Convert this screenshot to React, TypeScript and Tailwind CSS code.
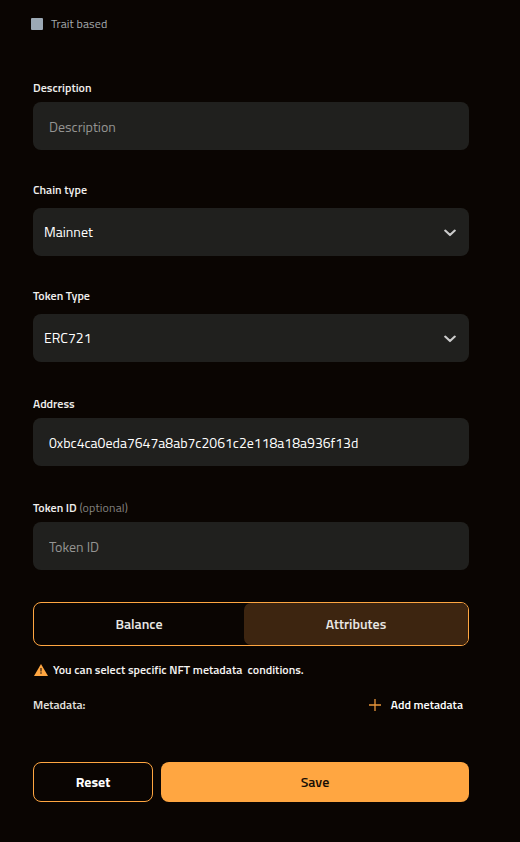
import React from "react";

const fieldBox =
  "block h-12 w-full rounded-lg bg-[#20201e] px-4 text-sm text-white outline-none placeholder:text-[#949492] placeholder:opacity-100";
const labelText = "flex h-4 items-center whitespace-pre text-xs leading-4 text-[#f0efed]";

function Chevron() {
  return (
    <svg width="12" height="8" viewBox="0 0 12 8" fill="none" stroke="#cccccc" strokeWidth="2.1" strokeLinecap="round" strokeLinejoin="round" className="mt-px">
      <path d="M1.2 1.6 6 6.1l4.8-4.5" />
    </svg>
  );
}

function SelectBox({ children }: { children: React.ReactNode }) {
  return (
    <div className="flex h-12 items-center justify-between rounded-lg bg-[#20201e] pr-[13px] pl-[11px] text-sm text-white">
      {children}
      <Chevron />
    </div>
  );
}

export default function App() {
  return (
    <main className="h-[842px] w-full bg-[#0a0502] pt-4 pl-[33px] font-['Titillium_Web','Roboto',sans-serif]">
      <div className="w-[436px]">
        <div className="-ml-0.5 flex h-4 items-center gap-2">
          <span className="size-3 rounded-[1px] bg-[#9ca9b5]" />
          <span className="text-xs leading-4 tracking-[0.1px] text-[#a6abae]">Trait based</span>
        </div>

        <div className="mt-12">
          <label className={labelText}><span className="font-semibold">Description</span></label>
          <input className={`${fieldBox} mt-1.5`} placeholder="Description" />
        </div>

        <div className="mt-8">
          <label className={labelText}><span className="font-semibold">Chain type</span></label>
          <div className="mt-2.5">
            <SelectBox><span>Mainnet</span></SelectBox>
          </div>
        </div>

        <div className="mt-8">
          <label className={labelText}><span className="font-semibold">Token Type</span></label>
          <div className="mt-2.5">
            <SelectBox><span>ERC721</span></SelectBox>
          </div>
        </div>

        <div className="mt-[34px]">
          <label className={labelText}><span className="font-semibold">Address</span></label>
          <input className={`${fieldBox} mt-1.5`} defaultValue="0xbc4ca0eda7647a8ab7c2061c2e118a18a936f13d" />
        </div>

        <div className="mt-[34px]">
          <label className={labelText}>
            <span className="font-semibold">Token ID </span>
            <span className="tracking-[0.15px] text-[#84827f]">(optional)</span>
          </label>
          <input className={`${fieldBox} mt-1.5`} placeholder="Token ID" />
        </div>

        <div className="mt-8 flex h-11 rounded-lg border border-[#ffa641] text-sm font-semibold text-[#e9e7e4]">
          <button className="w-[210px]">Balance</button>
          <button className="grow rounded-[7px] bg-[#3d2510]">Attributes</button>
        </div>

        <div className="mt-4 flex h-4 items-center gap-[5px] pl-px">
          <svg width="14" height="12" viewBox="0 0 14 12" className="shrink-0">
            <path d="M7 0 14 12H0Z" fill="#ffa641" />
            <path d="M6 4h2v3.5H6zM6 8.3h2v1.5H6z" fill="#7d5224" />
          </svg>
          <span className="text-xs leading-4 font-semibold whitespace-pre text-[#f6f4f2]">{"You can select specific NFT metadata  conditions."}</span>
        </div>

        <div className="mt-[19px] flex h-4 items-center justify-between pr-1.5 text-xs leading-4">
          <span className="font-semibold text-[#e4e2df]">Metadata:</span>
          <button className="flex items-center gap-[10px]">
            <svg width="12" height="12" viewBox="0 0 12 12" fill="none" stroke="#e8953b" strokeWidth="1.3">
              <path d="M6 0v12M0 6h12" />
            </svg>
            <span className="font-semibold text-white">Add metadata</span>
          </button>
        </div>

        <div className="mt-[49px] flex h-10 gap-2 text-sm">
          <button className="w-[120px] rounded-lg border border-[#ffa641] font-bold text-white">Reset</button>
          <button className="grow rounded-lg bg-[#ffa641] font-semibold text-[#160d05]">Save</button>
        </div>
      </div>
    </main>
  );
}
